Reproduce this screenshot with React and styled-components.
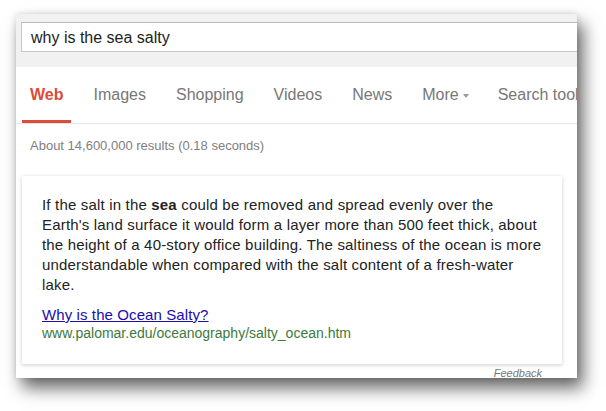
import React from 'react';
import styled, { createGlobalStyle } from 'styled-components';

const GlobalStyle = createGlobalStyle`
    html, body {
        margin: 0;
        padding: 0;
        background: #fff;
    }
    body {
        font-family: "Liberation Sans", Arial, sans-serif;
    }
`;

const tabs = ['Web', 'Images', 'Shopping', 'Videos', 'News', 'More', 'Search tools'];

const App = () => {
    return (
        <>
            <GlobalStyle />
            <Page>
                <Window>
                    <Header>
                        <SearchBox>why is the sea salty</SearchBox>
                    </Header>
                    <TabBar>
                        {tabs.map(tab => (
                            <Tab key={tab} active={tab === 'Web'}>
                                {tab}
                                {tab === 'More' && <Caret />}
                            </Tab>
                        ))}
                    </TabBar>
                    <Stats>About 14,600,000 results (0.18 seconds)</Stats>
                    <AnswerCard>
                        <Snippet>
                            If the salt in the <b>sea</b> could be removed and spread evenly over the<br />
                            Earth's land surface it would form a layer more than 500 feet thick, about<br />
                            the height of a 40-story office building. The saltiness of the ocean is more<br />
                            understandable when compared with the salt content of a fresh-water<br />
                            lake.
                        </Snippet>
                        <Source>
                            <SourceLink href="#">Why is the Ocean Salty?</SourceLink>
                            <SourceUrl>www.palomar.edu/oceanography/salty_ocean.htm</SourceUrl>
                        </Source>
                    </AnswerCard>
                    <Feedback>Feedback</Feedback>
                </Window>
            </Page>
        </>
    );
};

const Page = styled.div`
    padding: 14px 0 0 16px;
    height: 411px;
    box-sizing: border-box;
`;

const Window = styled.div`
    width: 561px;
    height: 364px;
    background: #fff;
    overflow: hidden;
    box-shadow: 6px 10px 16px rgba(0, 0, 0, 0.6), 0 0 6px rgba(0, 0, 0, 0.12);
    display: flex;
    flex-direction: column;
    & > * {
        flex-shrink: 0;
    }
`;

const Header = styled.div`
    height: 53px;
    box-sizing: border-box;
    background: #f1f1f1;
    padding: 8px 0 0 5px;
`;

const SearchBox = styled.div`
    width: 620px;
    height: 30px;
    box-sizing: border-box;
    background: #fff;
    border: 1px solid #c8c8c8;
    border-top-color: #b9b9b9;
    padding: 1px 0 0 9px;
    font-size: 16px;
    line-height: 28px;
    color: #222;
`;

const TabBar = styled.div`
    display: flex;
    gap: 14px;
    height: 57px;
    box-sizing: border-box;
    border-bottom: 1px solid #e5e5e5;
    padding-left: 6px;
    white-space: nowrap;
`;

const Tab = styled.div`
    display: flex;
    align-items: center;
    padding: 2px 8px 0;
    font-size: 16px;
    font-weight: ${p => (p.active ? 'bold' : 'normal')};
    color: ${p => (p.active ? '#dd4b39' : '#777')};
    border-bottom: 3px solid ${p => (p.active ? '#dd4b39' : 'transparent')};
`;

const Caret = styled.span`
    margin-left: 4px;
    margin-right: -1px;
    margin-top: 2px;
    border-left: 3.5px solid transparent;
    border-right: 3.5px solid transparent;
    border-top: 4px solid #999;
`;

const Stats = styled.div`
    height: 52px;
    box-sizing: border-box;
    padding: 14px 0 0 14px;
    font-size: 13px;
    line-height: 16px;
    color: #808080;
`;

const AnswerCard = styled.div`
    margin-left: 6px;
    width: 540px;
    height: 188px;
    box-sizing: border-box;
    padding: 19px 20px 0;
    background: #fff;
    box-shadow: 0 1px 4px rgba(0, 0, 0, 0.2);
`;

const Snippet = styled.div`
    font-size: 15px;
    line-height: 20px;
    letter-spacing: 0.18px;
    white-space: nowrap;
    color: #222;
    b {
        font-weight: bold;
    }
`;

const Source = styled.div`
    margin-top: 10px;
    display: flex;
    flex-direction: column;
`;

const SourceLink = styled.a`
    font-size: 15px;
    line-height: 20px;
    letter-spacing: 0.1px;
    color: #1a0dab;
    text-decoration: underline;
    align-self: flex-start;
`;

const SourceUrl = styled.span`
    font-size: 14px;
    line-height: 16px;
    color: #3c7a3c;
`;

const Feedback = styled.div`
    width: 526px;
    padding-top: 4px;
    text-align: right;
    font-size: 11px;
    line-height: 11px;
    font-style: italic;
    color: #777;
`;

export default App;
